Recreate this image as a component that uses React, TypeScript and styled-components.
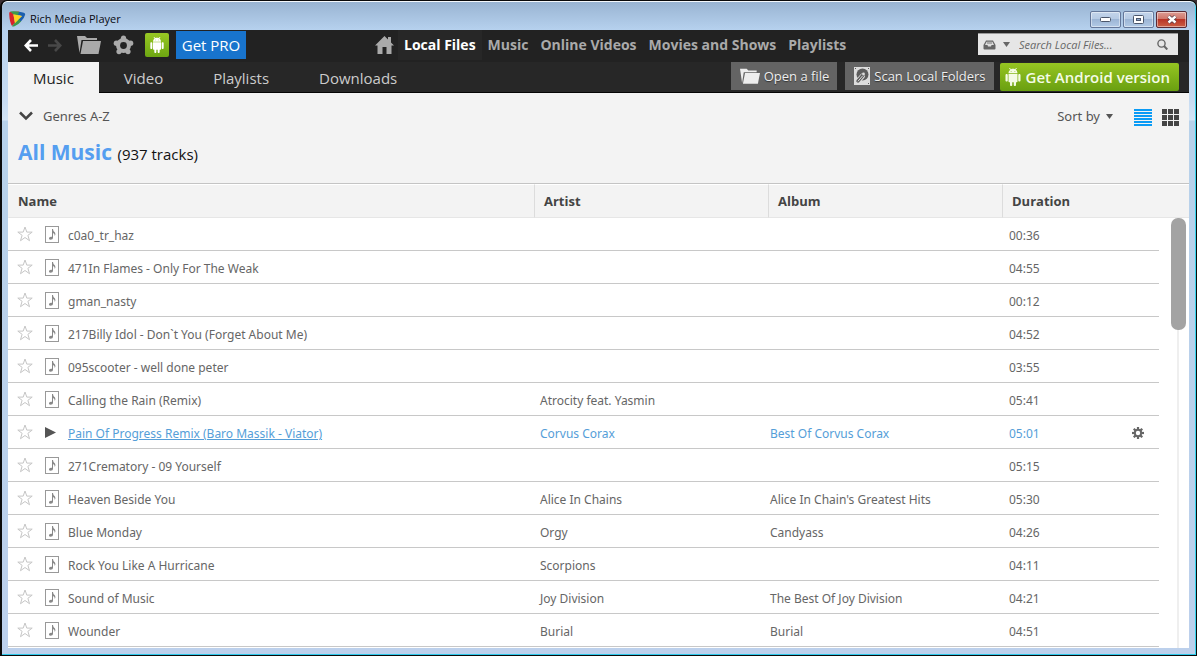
import React from 'react';
import styled, { createGlobalStyle, css } from 'styled-components';

const uiFont = '"Open Sans", "Noto Sans", sans-serif';
const listFont = '"Noto Sans", "Open Sans", sans-serif';

const GlobalStyle = createGlobalStyle`
  *, *::before, *::after { box-sizing: border-box; }
  html, body { margin: 0; padding: 0; background: #3a2f33; }
  button, input { font: inherit; color: inherit; }
  button { border: 0; padding: 0; background: none; cursor: pointer; }
  svg { display: block; flex: none; }
`;

/* ---------- window frame ---------- */

const Frame = styled.div`
  display: flex;
  flex-direction: column;
  min-height: 100vh;
  padding: 0 7px 7px 6px;
  border: solid #0a0a0a;
  border-width: 1px 1px 1px 2px;
  border-radius: 7px 7px 0 0;
  background: linear-gradient(180deg, #98b3d1 0, #b6d1ee 29px, #c8dcf2 100px, #d3e4f5 119px, #b7d1ea 120px, #bcd0ec 100%);
  box-shadow: inset 0 1px 0 #f4f8fc, inset -1px 0 0 #35d5ee, inset 0 -1px 0 #2cc8ea;
  font-family: ${uiFont};
  color: #555;
`;

const TitleBar = styled.header`
  display: flex;
  align-items: center;
  height: 29px;
  padding: 7px 2px 0 1px;
  gap: 4px;
`;

const Title = styled.h1`
  flex: 1;
  margin: 0;
  font-size: 11px;
  font-weight: 400;
  line-height: 16px;
  color: #0a0a12;
`;

const WindowButtons = styled.div`
  display: flex;
  gap: 2px;
`;

const WindowButton = styled.button<{ $close?: boolean }>`
  display: flex;
  align-items: center;
  justify-content: center;
  width: 31px;
  height: 17px;
  border: 1px solid ${p => (p.$close ? '#5b2a35' : '#64779a')};
  border-radius: 2px;
  box-shadow: inset 0 0 0 1px rgba(255, 255, 255, 0.45);
  background: ${p =>
    p.$close
      ? 'linear-gradient(180deg, #dd9c94 0, #cf7468 48%, #b93426 50%, #cb5f45 100%)'
      : 'linear-gradient(180deg, #c3d4ea 0, #b5cae4 48%, #9cb5d5 50%, #b2cae6 100%)'};
`;

const Client = styled.div`
  display: flex;
  flex: 1;
  flex-direction: column;
  background: #fff;
`;

/* ---------- dark bars ---------- */

const Toolbar = styled.div`
  display: flex;
  height: 32px;
  padding-right: 11px;
  background: #222;
`;

const ToolGroup = styled.div`
  display: flex;
  flex: 0 0 360px;
  align-items: center;
  height: 30px;
  padding-left: 16px;
`;

const ToolButton = styled.button<{ $width: number; $color?: string }>`
  display: flex;
  align-items: center;
  justify-content: center;
  width: ${p => p.$width}px;
  height: 30px;
  color: ${p => p.$color ?? '#aaa'};
`;

const AndroidBadge = styled.button`
  display: flex;
  align-items: center;
  justify-content: center;
  width: 24px;
  height: 24px;
  margin: 0 7px 0 4px;
  border-radius: 2px;
  color: #fff;
  background: linear-gradient(180deg, #98c824, #6da612);
`;

const ProButton = styled.button`
  width: 70px;
  height: 28px;
  font-size: 15px;
  line-height: 28px;
  color: #fff;
  background: #1874cd;
`;

const MainNav = styled.nav`
  display: flex;
  flex: 1;
  height: 30px;
`;

const NavLink = styled.a<{ $active?: boolean }>`
  display: flex;
  align-items: center;
  padding: 0 6px;
  font-size: 14px;
  font-weight: 700;
  line-height: 20px;
  white-space: nowrap;
  text-decoration: none;
  color: ${p => (p.$active ? '#fff' : '#aaa')};
  background: ${p => (p.$active ? '#272727' : 'none')};
`;

const HomeLink = styled(NavLink)`
  padding: 0 4px 0 7px;
`;

const Search = styled.form`
  display: flex;
  align-items: center;
  flex: 0 0 200px;
  height: 22px;
  margin-top: 3px;
  padding: 0 10px 0 5px;
  border-top: 1px solid #999;
  color: #666;
  background: #e6e6e6;
`;

const SearchScope = styled.button`
  display: flex;
  align-items: center;
  gap: 7px;
  margin-right: 9px;
`;

const SearchInput = styled.input`
  flex: 1;
  min-width: 0;
  padding: 0;
  border: 0;
  outline: 0;
  background: none;
  font-size: 11px;
  font-style: italic;
  line-height: 16px;
  &::placeholder { color: #666; opacity: 1; }
`;

const TabBar = styled.div`
  display: flex;
  justify-content: space-between;
  height: 31px;
  padding-right: 10px;
  border-bottom: 1px solid #050505;
  background: #272727;
`;

const Tabs = styled.nav`
  display: flex;
`;

const Tab = styled.a<{ $active?: boolean }>`
  height: 31px;
  padding: 1px 25px 0;
  font-size: 15px;
  line-height: 31px;
  text-decoration: none;
  white-space: nowrap;
  color: ${p => (p.$active ? '#222' : '#ccc')};
  background: ${p => (p.$active ? '#f3f3f3' : 'none')};
`;

const Actions = styled.div`
  display: flex;
  gap: 8px;
`;

const ActionButton = styled.button`
  display: flex;
  align-items: center;
  gap: 4px;
  height: 28px;
  padding: 0 8px 0 9px;
  font-size: 13px;
  line-height: 28px;
  white-space: nowrap;
  text-shadow: 0 1px 1px #333;
  color: #eee;
  background: #646464;
`;

const AndroidButton = styled(ActionButton)`
  margin-left: -2px;
  margin-top: 1px;
  padding: 0 9px 0 4px;
  border-radius: 2px;
  font-size: 15px;
  font-weight: 600;
  text-shadow: none;
  color: #f4fbe6;
  background: linear-gradient(180deg, #96c522, #699f10);
`;

/* ---------- library heading ---------- */

const Heading = styled.section`
  display: flex;
  justify-content: space-between;
  align-items: flex-start;
  height: 91px;
  padding: 13px 10px 0;
  border-bottom: 1px solid #c4c4c4;
  background: #f3f3f3;
`;

const GenreButton = styled.button`
  display: flex;
  align-items: center;
  gap: 9px;
  font-family: ${listFont};
  font-size: 13px;
  line-height: 20px;
`;

const ListTitle = styled.h2`
  margin: 10px 0 0;
  font-size: 21px;
  font-weight: 700;
  line-height: 32px;
  color: #559ef0;
`;

const TrackCount = styled.span`
  font-size: 15px;
  font-weight: 400;
  color: #111;
`;

const ViewTools = styled.div`
  display: flex;
  align-items: center;
`;

const SortButton = styled.button`
  display: flex;
  align-items: center;
  gap: 6px;
  margin-right: 11px;
  font-family: ${listFont};
  font-size: 13px;
  line-height: 20px;
`;

const ViewButton = styled.button<{ $color: string }>`
  margin: 2px 0 0 10px;
  color: ${p => p.$color};
`;

/* ---------- track table ---------- */

const ListArea = styled.div`
  display: flex;
  flex: 1;
`;

const Table = styled.table`
  flex: 1;
  align-self: flex-start;
  width: 100%;
  min-width: 0;
  table-layout: fixed;
  border-collapse: separate;
  border-spacing: 0;
  font-family: ${listFont};
`;

const Col = styled.col<{ $width?: number }>`
  ${p => p.$width && css`width: ${p.$width}px;`}
`;

const HeadCell = styled.th<{ $divided?: boolean }>`
  height: 34px;
  padding: 0 9px;
  font-family: ${uiFont};
  font-size: 13px;
  font-weight: 700;
  line-height: 20px;
  text-align: left;
  color: #444;
  border-top: 1px solid #fff;
  border-bottom: 1px solid #e6e6e6;
  border-left: 1px solid ${p => (p.$divided ? '#dcdcdc' : '#f3f3f3')};
  background: #f3f3f3;
`;

const Row = styled.tr<{ $playing?: boolean }>`
  color: ${p => (p.$playing ? '#559ed8' : '#666')};
`;

const Cell = styled.td<{ $indent: number }>`
  height: 33px;
  padding: 4px 0 0 ${p => p.$indent}px;
  border-bottom: 1px solid #c8c8c8;
  font-size: 12px;
  line-height: 20px;
  white-space: nowrap;
  overflow: hidden;
  text-overflow: ellipsis;
`;

const CellRow = styled.div`
  display: flex;
  align-items: center;
  height: 20px;
`;

const StarButton = styled.button`
  width: 28px;
  margin-bottom: 4px;
`;

const IconSlot = styled.span`
  width: 23px;
  margin-bottom: 4px;
`;

const TrackLink = styled.a<{ $playing?: boolean }>`
  color: inherit;
  text-decoration: ${p => (p.$playing ? 'underline' : 'none')};
`;

const RowMenu = styled.button`
  margin: 0 15px 2px auto;
  color: #666;
`;

const ScrollGutter = styled.div`
  display: flex;
  flex-direction: column;
  width: 30px;
`;

const GutterHead = styled.div`
  height: 34px;
  border-top: 1px solid #fff;
  border-bottom: 1px solid #e6e6e6;
  background: #f3f3f3;
`;

const ScrollTrack = styled.div`
  flex: 1;
  width: 15px;
  margin-left: 12px;
  background: linear-gradient(#efefef, #efefef) 6px 0 / 2px 100% no-repeat;
`;

const ScrollThumb = styled.div`
  height: 112px;
  border-radius: 7px;
  background: #a3a3a3;
`;

/* ---------- icons ---------- */

const AppLogo = () => (
  <svg width="17" height="16" viewBox="0 0 17 16">
    <path d="M1 1Q0 1 0.200 3Q0.500 11 3 15L6 12L4.500 3.500L9 4L10 0.500Z" fill="#d8232b" />
    <path d="M1 0.500Q6 -0.300 11 1L9.500 4.500L4.500 3.500Z" fill="#3d9a4c" />
    <path d="M10 0.800Q16.500 1.500 16.200 3.500Q15.500 7 11.500 11L9 8.500L13 5L9 4Z" fill="#1b5fae" />
    <path d="M3 15.200Q4 16 6 15Q9.500 13.500 12 10.500L9.500 8L6 11.500Z" fill="#3d9a4c" />
    <path d="M4.300 3.300L13 5L6 12.200Z" fill="#ffd21f" />
  </svg>
);

const ArrowIcon = ({ flip }: { flip?: boolean }) => (
  <svg width="14" height="13" viewBox="0 0 14 13" fill="none" stroke="currentColor" strokeWidth="2.600">
    {flip ? <path d="M0 6.500H12M7 1L12.300 6.500L7 12" /> : <path d="M14 6.500H2M7 1L1.700 6.500L7 12" />}
  </svg>
);

const FolderIcon = ({ size }: { size: number }) => (
  <svg width={size} height={(size * 5) / 6} viewBox="0 0 24 20" fill="currentColor">
    <path d="M0 1H8L10 3H20V5H4.500L2.500 18Z" />
    <path d="M6 6H24L21.500 19H3.500Z" />
  </svg>
);

const CogIcon = () => (
  <svg width="21" height="20" viewBox="0 0 21 20">
    <g fill="currentColor">
      <circle cx="10.500" cy="10.500" r="7.500" />
      <circle cx="10.500" cy="3" r="2.600" />
      <circle cx="17.700" cy="8.200" r="2.600" />
      <circle cx="15" cy="16.600" r="2.600" />
      <circle cx="6" cy="16.600" r="2.600" />
      <circle cx="3.300" cy="8.200" r="2.600" />
    </g>
    <circle cx="10.500" cy="10.500" r="3.400" fill="#222" />
  </svg>
);

const AndroidIcon = ({ size }: { size: number }) => (
  <svg width={size} height={size} viewBox="0 0 24 24" fill="currentColor">
    <path d="M6 18c0 .55.45 1 1 1h1v3.500c0 .83.67 1.500 1.500 1.500s1.500-.67 1.500-1.500V19h2v3.500c0 .83.67 1.500 1.500 1.500s1.500-.67 1.500-1.500V19h1c.55 0 1-.45 1-1V8H6v10zM3.500 8C2.670 8 2 8.670 2 9.500v7c0 .83.67 1.500 1.500 1.500S5 17.330 5 16.500v-7C5 8.670 4.330 8 3.500 8zm17 0c-.83 0-1.500.67-1.500 1.500v7c0 .83.67 1.500 1.500 1.500s1.500-.67 1.500-1.500v-7c0-.83-.67-1.500-1.500-1.500zm-4.970-5.840l1.300-1.300c.2-.2.2-.51 0-.71-.2-.2-.51-.2-.71 0l-1.480 1.480C13.850 1.230 12.950 1 12 1c-.96 0-1.860.23-2.660.63L7.850.15c-.2-.2-.51-.2-.71 0-.2.2-.2.51 0 .71l1.310 1.310C6.970 3.260 6 5.010 6 7h12c0-1.990-.97-3.750-2.470-4.840zM10 5H9V4h1v1zm5 0h-1V4h1v1z" />
  </svg>
);

const HomeIcon = () => (
  <svg width="19" height="18" viewBox="0 0 19 18" fill="currentColor">
    <path d="M9.500 0L0 9.500H2.500V18H7.500V11H11.500V18H16.500V9.500H19L16 6.500V1H13V3.500Z" />
  </svg>
);

const TrayIcon = () => (
  <svg width="13" height="10" viewBox="0 0 13 10">
    <path d="M3 0.500H10L12.500 5V8.500Q12.500 9.500 11.500 9.500H1.500Q0.500 9.500 0.500 8.500V5Z" fill="#666" />
    <path d="M3.600 1.800H9.400L11 5H8.500L8 6.500H5L4.500 5H2Z" fill="#ddd" />
    <path d="M4 3H9" stroke="#777" />
  </svg>
);

const Caret = () => (
  <svg width="7" height="5" viewBox="0 0 7 5" fill="currentColor">
    <path d="M0 0H7L3.500 5Z" />
  </svg>
);

const SearchIcon = () => (
  <svg width="11" height="11" viewBox="0 0 11 11" fill="none" stroke="currentColor">
    <circle cx="4.500" cy="4.500" r="3.600" strokeWidth="1.400" />
    <path d="M7 7L10.300 10.500" strokeWidth="2" />
  </svg>
);

const DiskIcon = () => (
  <svg width="16" height="18" viewBox="0 0 16 18">
    <rect width="16" height="18" fill="#dcdcdc" />
    <circle cx="8.500" cy="7.500" r="6" fill="#5c5c5c" />
    <path d="M8.500 9L4 14" stroke="#dcdcdc" strokeWidth="5" strokeLinecap="round" />
    <path d="M9 8L4 14" stroke="#5c5c5c" strokeWidth="3.400" strokeLinecap="round" />
    <path d="M8.500 9L4.200 14" stroke="#dcdcdc" strokeWidth="1" strokeLinecap="round" />
    <circle cx="9.500" cy="7" r="1.400" fill="#dcdcdc" />
    <path d="M1 1h1v1H1zM14 1h1v1h-1zM14 16h1v1h-1z" fill="#5c5c5c" />
  </svg>
);

const ChevronIcon = () => (
  <svg width="16" height="10" viewBox="0 0 16 10" fill="none" stroke="#444" strokeWidth="2.500">
    <path d="M2 1.500L8 7.500L14 1.500" />
  </svg>
);

const LinesIcon = () => (
  <svg width="18" height="17" viewBox="0 0 18 17" fill="currentColor">
    {[0, 3, 6, 9, 12, 15].map(y => (
      <rect key={y} y={y} width="18" height="2" />
    ))}
  </svg>
);

const GridIcon = () => (
  <svg width="17" height="17" viewBox="0 0 17 17" fill="currentColor">
    {[0, 6, 12].map(y => [0, 6, 12].map(x => <rect key={`${x}-${y}`} x={x} y={y} width="5" height="5" />))}
  </svg>
);

const StarIcon = () => (
  <svg width="16" height="16" viewBox="0 0 16 16" fill="none" stroke="#c6c6c6">
    <path d="M8 1L9.800 6.100H15.200L10.900 9.300L12.500 14.700L8 11.500L3.500 14.700L5.100 9.300L0.800 6.100H6.200Z" />
  </svg>
);

const NoteIcon = () => (
  <svg width="14" height="17" viewBox="0 0 14 17">
    <rect x="0.500" y="0.500" width="13" height="16" fill="none" stroke="#999" />
    <path d="M7 3H8Q8 5 10 6.500Q11 8 9.800 10Q9.800 7.500 8 7V12Q8 13.800 5.500 13.800Q3.500 13.500 4 12Q4.800 10.500 7 10.800Z" fill="#888" />
  </svg>
);

const PlayIcon = () => (
  <svg width="11" height="11" viewBox="0 0 11 11" fill="#555">
    <path d="M0 0L11 5.500L0 11Z" />
  </svg>
);

const GearIcon = () => (
  <svg width="12" height="12" viewBox="-6 -6 12 12">
    <g fill="currentColor">
      {[0, 45, 90, 135, 180, 225, 270, 315].map(a => (
        <rect key={a} x="-1.100" y="-6" width="2.200" height="3" transform={`rotate(${a})`} />
      ))}
    </g>
    <circle r="3.200" fill="none" stroke="currentColor" strokeWidth="2" />
  </svg>
);

const MinimizeGlyph = () => (
  <svg width="11" height="5" viewBox="0 0 11 5">
    <rect x="0.500" y="0.500" width="10" height="4" rx="1" fill="#fff" stroke="#4b566b" />
  </svg>
);

const MaximizeGlyph = () => (
  <svg width="11" height="9" viewBox="0 0 11 9">
    <rect x="0.500" y="0.500" width="10" height="8" rx="1" fill="#fff" stroke="#4b566b" />
    <rect x="3.500" y="3.500" width="4" height="2" fill="#8fa9cc" stroke="#4b566b" />
  </svg>
);

const CloseGlyph = () => (
  <svg width="12" height="9" viewBox="0 0 12 9">
    <path d="M2.500 1.500L9.500 7.500M9.500 1.500L2.500 7.500" stroke="#553a45" strokeWidth="4" />
    <path d="M2.500 1.500L9.500 7.500M9.500 1.500L2.500 7.500" stroke="#fff" strokeWidth="2.400" />
  </svg>
);

/* ---------- data ---------- */

interface Track {
  name: string;
  artist?: string;
  album?: string;
  duration: string;
  playing?: boolean;
}

const tracks: Track[] = [
  { name: 'c0a0_tr_haz', duration: '00:36' },
  { name: '471In Flames - Only For The Weak', duration: '04:55' },
  { name: 'gman_nasty', duration: '00:12' },
  { name: '217Billy Idol - Don`t You (Forget About Me)', duration: '04:52' },
  { name: '095scooter - well done peter', duration: '03:55' },
  { name: 'Calling the Rain (Remix)', artist: 'Atrocity feat. Yasmin', duration: '05:41' },
  {
    name: 'Pain Of Progress Remix (Baro Massik - Viator)',
    artist: 'Corvus Corax',
    album: 'Best Of Corvus Corax',
    duration: '05:01',
    playing: true,
  },
  { name: '271Crematory - 09 Yourself', duration: '05:15' },
  { name: 'Heaven Beside You', artist: 'Alice In Chains', album: "Alice In Chain's Greatest Hits", duration: '05:30' },
  { name: 'Blue Monday', artist: 'Orgy', album: 'Candyass', duration: '04:26' },
  { name: 'Rock You Like A Hurricane', artist: 'Scorpions', duration: '04:11' },
  { name: 'Sound of Music', artist: 'Joy Division', album: 'The Best Of Joy Division', duration: '04:21' },
  { name: 'Wounder', artist: 'Burial', album: 'Burial', duration: '04:51' },
];

const navItems = ['Local Files', 'Music', 'Online Videos', 'Movies and Shows', 'Playlists'];
const tabItems = ['Music', 'Video', 'Playlists', 'Downloads'];

const TrackRow = ({ track }: { track: Track }) => (
  <Row $playing={track.playing}>
    <Cell $indent={9}>
      <CellRow>
        <StarButton aria-label={`Add ${track.name} to favourites`}>
          <StarIcon />
        </StarButton>
        <IconSlot>{track.playing ? <PlayIcon /> : <NoteIcon />}</IconSlot>
        <TrackLink href="#" $playing={track.playing}>
          {track.name}
        </TrackLink>
      </CellRow>
    </Cell>
    <Cell $indent={6}>{track.artist}</Cell>
    <Cell $indent={2}>{track.album}</Cell>
    <Cell $indent={7}>
      <CellRow>
        {track.duration}
        {track.playing && (
          <RowMenu aria-label="Track options">
            <GearIcon />
          </RowMenu>
        )}
      </CellRow>
    </Cell>
  </Row>
);

export default function App() {
  return (
    <>
      <GlobalStyle />
      <Frame>
        <TitleBar>
          <AppLogo />
          <Title>Rich Media Player</Title>
          <WindowButtons>
            <WindowButton aria-label="Minimize">
              <MinimizeGlyph />
            </WindowButton>
            <WindowButton aria-label="Maximize">
              <MaximizeGlyph />
            </WindowButton>
            <WindowButton $close aria-label="Close">
              <CloseGlyph />
            </WindowButton>
          </WindowButtons>
        </TitleBar>

        <Client>
          <Toolbar>
            <ToolGroup>
              <ToolButton $width={14} $color="#fff" aria-label="Back">
                <ArrowIcon />
              </ToolButton>
              <ToolButton $width={34} $color="#484848" aria-label="Forward">
                <ArrowIcon flip />
              </ToolButton>
              <ToolButton $width={34} aria-label="Open folder">
                <FolderIcon size={24} />
              </ToolButton>
              <ToolButton $width={35} aria-label="Settings">
                <CogIcon />
              </ToolButton>
              <AndroidBadge aria-label="Android">
                <AndroidIcon size={16} />
              </AndroidBadge>
              <ProButton>Get PRO</ProButton>
            </ToolGroup>
            <MainNav aria-label="Main">
              <HomeLink href="#" aria-label="Home">
                <HomeIcon />
              </HomeLink>
              {navItems.map((item, i) => (
                <NavLink key={item} href="#" $active={i === 0}>
                  {item}
                </NavLink>
              ))}
            </MainNav>
            <Search role="search" onSubmit={e => e.preventDefault()}>
              <SearchScope type="button" aria-label="Search in">
                <TrayIcon />
                <Caret />
              </SearchScope>
              <SearchInput type="text" aria-label="Search local files" placeholder="Search Local Files..." />
              <button type="submit" aria-label="Search">
                <SearchIcon />
              </button>
            </Search>
          </Toolbar>

          <TabBar>
            <Tabs aria-label="Library">
              {tabItems.map((item, i) => (
                <Tab key={item} href="#" $active={i === 0}>
                  {item}
                </Tab>
              ))}
            </Tabs>
            <Actions>
              <ActionButton>
                <FolderIcon size={20} />
                Open a file
              </ActionButton>
              <ActionButton>
                <DiskIcon />
                Scan Local Folders
              </ActionButton>
              <AndroidButton>
                <AndroidIcon size={18} />
                Get Android version
              </AndroidButton>
            </Actions>
          </TabBar>

          <Heading>
            <div>
              <GenreButton>
                <ChevronIcon />
                Genres A-Z
              </GenreButton>
              <ListTitle>
                All Music <TrackCount>(937 tracks)</TrackCount>
              </ListTitle>
            </div>
            <ViewTools>
              <SortButton aria-haspopup="menu">
                Sort by
                <Caret />
              </SortButton>
              <ViewButton $color="#0a9bf5" aria-label="List view">
                <LinesIcon />
              </ViewButton>
              <ViewButton $color="#444" aria-label="Grid view">
                <GridIcon />
              </ViewButton>
            </ViewTools>
          </Heading>

          <ListArea>
            <Table>
              <colgroup>
                <Col />
                <Col $width={234} />
                <Col $width={234} />
                <Col $width={157} />
              </colgroup>
              <thead>
                <tr>
                  <HeadCell>Name</HeadCell>
                  <HeadCell $divided>Artist</HeadCell>
                  <HeadCell $divided>Album</HeadCell>
                  <HeadCell $divided>Duration</HeadCell>
                </tr>
              </thead>
              <tbody>
                {tracks.map(track => (
                  <TrackRow key={track.name} track={track} />
                ))}
              </tbody>
            </Table>
            <ScrollGutter>
              <GutterHead />
              <ScrollTrack>
                <ScrollThumb />
              </ScrollTrack>
            </ScrollGutter>
          </ListArea>
        </Client>
      </Frame>
    </>
  );
}
